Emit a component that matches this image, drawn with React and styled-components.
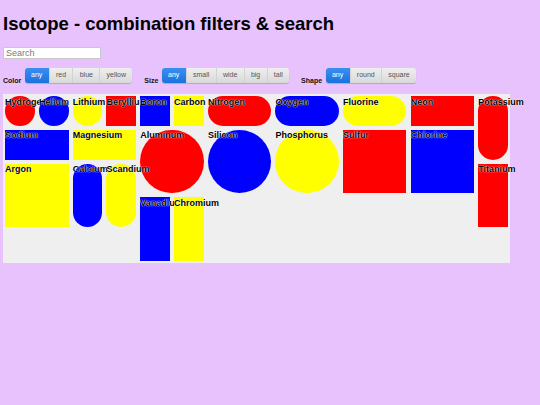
import React from "react";
import styled, { createGlobalStyle } from "styled-components";

const Global = createGlobalStyle`
  html, body { margin: 0; padding: 0; }
  body {
    background: #e8c2fc;
    font-family: "Liberation Sans", Arial, sans-serif;
    padding: 3px;
  }
`;

const Page = styled.div`
  display: flex;
  flex-direction: column;
  width: 507px;
`;

const Title = styled.h1`
  font-size: 18.5px;
  font-weight: bold;
  line-height: 21px;
  margin: 10px 0 0;
  color: #000;
`;

const SearchInput = styled.input`
  box-sizing: border-box;
  width: 98px;
  height: 12px;
  margin: 12.5px 0 0;
  padding: 0 2px;
  border: 1px solid #c9c9c9;
  background: #fff;
  font-family: "Liberation Sans", Arial, sans-serif;
  font-size: 9px;
  color: #333;
  outline: none;
  &::placeholder { color: #7a7a7a; }
`;

const Filters = styled.div`
  display: flex;
  align-items: flex-end;
  margin-top: 9px;
  height: 15px;
`;

const FilterGroup = styled.div`
  display: flex;
  align-items: flex-end;
  gap: 3.5px;
  margin-right: 12px;
`;

const FilterLabel = styled.span`
  font-size: 7px;
  font-weight: bold;
  line-height: 7px;
  margin-bottom: -1px;
  color: #111;
`;

const ButtonGroup = styled.div`
  display: flex;
  height: 15px;
  border-radius: 3px;
  box-shadow: 0 1px 1px rgba(0, 0, 0, 0.18);
  overflow: hidden;
`;

const FilterButton = styled.button`
  height: 15px;
  padding: 0 6.3px 2px;
  margin: 0;
  border: none;
  border-left: 1px solid ${(p) => (p.$active ? "transparent" : "#d2d2d2")};
  &:first-child { border-left: none; }
  font-family: "Liberation Sans", Arial, sans-serif;
  font-size: 7px;
  line-height: 13px;
  color: ${(p) => (p.$active ? "#fff" : "#555")};
  background: ${(p) =>
    p.$active
      ? "linear-gradient(#3a8ff0, #1a72de)"
      : "linear-gradient(#efefef, #d9d9d9)"};
  cursor: pointer;
`;

const Grid = styled.div`
  display: grid;
  grid-template-columns: repeat(15, 33.8px);
  grid-auto-rows: 33.8px;
  background: #efefef;
  margin-top: 11.5px;
  width: 507px;
`;

const COLORS = { red: "#ff0000", blue: "#0000ff", yellow: "#ffff00" };

const Item = styled.div`
  position: relative;
  margin: 2.1px;
  grid-column: ${(p) => p.$col + 1} / span ${(p) => p.$w};
  grid-row: ${(p) => p.$row + 1} / span ${(p) => p.$h};
  background: ${(p) => COLORS[p.$color]};
  border-radius: ${(p) =>
    p.$shape === "round" ? (p.$w === p.$h ? "50%" : "15px") : "0"};
`;

const Name = styled.span`
  display: block;
  font-size: 9px;
  font-weight: bold;
  white-space: nowrap;
  color: #000;
  text-shadow: 0 0 1px #fff, 0 0 1px #fff;
  line-height: 10px;
  padding-top: 0.5px;
`;

const SIZES = {
  small: [1, 1],
  wide: [2, 1],
  big: [2, 2],
  tall: [1, 2],
};

const elements = [
  ["Hydrogen", "red", "small", "round", 0, 0],
  ["Helium", "blue", "small", "round", 1, 0],
  ["Lithium", "yellow", "small", "round", 2, 0],
  ["Beryllium", "red", "small", "square", 3, 0],
  ["Boron", "blue", "small", "square", 4, 0],
  ["Carbon", "yellow", "small", "square", 5, 0],
  ["Nitrogen", "red", "wide", "round", 6, 0],
  ["Oxygen", "blue", "wide", "round", 8, 0],
  ["Fluorine", "yellow", "wide", "round", 10, 0],
  ["Neon", "red", "wide", "square", 12, 0],
  ["Sodium", "blue", "wide", "square", 0, 1],
  ["Magnesium", "yellow", "wide", "square", 2, 1],
  ["Aluminum", "red", "big", "round", 4, 1],
  ["Silicon", "blue", "big", "round", 6, 1],
  ["Phosphorus", "yellow", "big", "round", 8, 1],
  ["Sulfur", "red", "big", "square", 10, 1],
  ["Chlorine", "blue", "big", "square", 12, 1],
  ["Argon", "yellow", "big", "square", 0, 2],
  ["Potassium", "red", "tall", "round", 14, 0],
  ["Calcium", "blue", "tall", "round", 2, 2],
  ["Scandium", "yellow", "tall", "round", 3, 2],
  ["Titanium", "red", "tall", "square", 14, 2],
  ["Vanadium", "blue", "tall", "square", 4, 3],
  ["Chromium", "yellow", "tall", "square", 5, 3],
];

const filterSets = [
  { label: "Color", options: ["any", "red", "blue", "yellow"] },
  { label: "Size", options: ["any", "small", "wide", "big", "tall"] },
  { label: "Shape", options: ["any", "round", "square"] },
];

export default function App() {
  return (
    <>
      <Global />
      <Page>
        <Title>Isotope - combination filters &amp; search</Title>
        <SearchInput type="text" placeholder="Search" />
        <Filters>
          {filterSets.map((f) => (
            <FilterGroup key={f.label}>
              <FilterLabel>{f.label}</FilterLabel>
              <ButtonGroup>
                {f.options.map((o, i) => (
                  <FilterButton key={o} $active={i === 0}>
                    {o}
                  </FilterButton>
                ))}
              </ButtonGroup>
            </FilterGroup>
          ))}
        </Filters>
        <Grid>
          {elements.map(([name, color, size, shape, col, row]) => {
            const [w, h] = SIZES[size];
            return (
              <Item
                key={name}
                $color={color}
                $shape={shape}
                $w={w}
                $h={h}
                $col={col}
                $row={row}
              >
                <Name>{name}</Name>
              </Item>
            );
          })}
        </Grid>
      </Page>
    </>
  );
}
